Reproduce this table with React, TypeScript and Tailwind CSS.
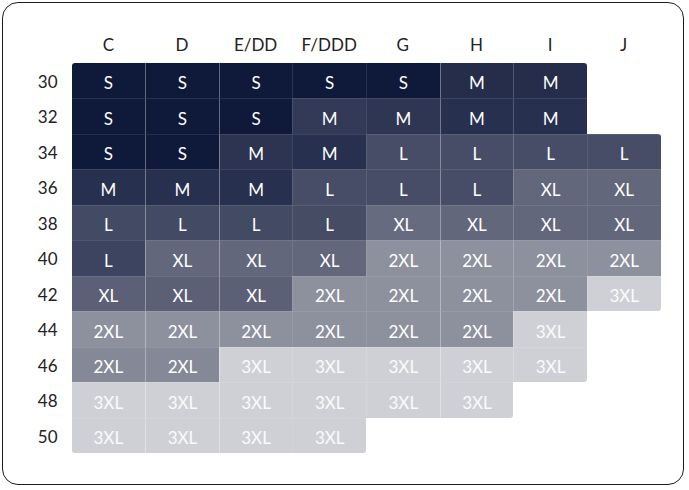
import React from "react";

const cols = ["C", "D", "E/DD", "F/DDD", "G", "H", "I", "J"];
const rows: [string, string[]][] = [
  ["30", ["S", "S", "S", "S", "S", "M", "M"]],
  ["32", ["S", "S", "S", "M", "M", "M", "M"]],
  ["34", ["S", "S", "M", "M", "L", "L", "L", "L"]],
  ["36", ["M", "M", "M", "L", "L", "L", "XL", "XL"]],
  ["38", ["L", "L", "L", "L", "XL", "XL", "XL", "XL"]],
  ["40", ["L", "XL", "XL", "XL", "2XL", "2XL", "2XL", "2XL"]],
  ["42", ["XL", "XL", "XL", "2XL", "2XL", "2XL", "2XL", "3XL"]],
  ["44", ["2XL", "2XL", "2XL", "2XL", "2XL", "2XL", "3XL"]],
  ["46", ["2XL", "2XL", "3XL", "3XL", "3XL", "3XL", "3XL"]],
  ["48", ["3XL", "3XL", "3XL", "3XL", "3XL", "3XL"]],
  ["50", ["3XL", "3XL", "3XL", "3XL"]],
];

const base: Record<string, string> = {
  S: "bg-[#0f1939]",
  M: "bg-[#283050]",
  L: "bg-[#474d66]",
  XL: "bg-[#62677c]",
  "2XL": "bg-[#8d909d]",
  "3XL": "bg-[#cfd0d6]",
};

const overrides: Record<string, string> = {
  "1-3": "bg-[#333a57]",
  "1-4": "bg-[#2e3653]",
  "0-5": "bg-[#252d4b]",
  "0-6": "bg-[#252d4b]",
  "2-2": "bg-[#2c3452]",
  "4-0": "bg-[#434a63]",
  "4-1": "bg-[#434a63]",
  "4-2": "bg-[#434a63]",
  "4-3": "bg-[#454c64]",
  "5-0": "bg-[#3d4460]",
  "4-4": "bg-[#666b80]",
  "6-0": "bg-[#5b6077]",
  "6-1": "bg-[#5b6077]",
  "6-2": "bg-[#5b6077]",
  "8-0": "bg-[#858896]",
  "8-1": "bg-[#858896]",
};

const colBorder = [
  "",
  "border-l border-l-white/35",
  "border-l border-l-white/35",
  "border-l border-l-white/10",
  "border-l border-l-white/10",
  "border-l border-l-white/35",
  "border-l border-l-white/20",
  "border-l border-l-white/10",
];

const corners: Record<string, string> = {
  "0-0": "rounded-tl-[3px]",
  "0-6": "rounded-tr-[3px]",
  "2-7": "rounded-tr-[3px]",
  "6-7": "rounded-br-[3px]",
  "8-6": "rounded-br-[3px]",
  "9-5": "rounded-br-[3px]",
  "10-3": "rounded-br-[3px]",
  "10-0": "rounded-bl-[3px]",
};

export default function App() {
  return (
    <div
      className="w-[689px] h-[490px] bg-white p-[2px]"
      style={{ fontFamily: "Lato, 'Open Sans', sans-serif" }}
    >
      <div className="w-[682px] h-[483px] border-[1.5px] border-[#1c1c1c] rounded-[16px] pt-[21.5px] pl-[68.5px]">
        <div className="grid grid-cols-[repeat(8,73.625px)] h-[38px] pt-[2px] items-center text-[17px] text-[#222]">
          {cols.map((c) => (
            <div key={c} className="text-center">
              {c}
            </div>
          ))}
        </div>
        <div className="relative">
          {rows.map(([label, cells], r) => (
            <div key={label} className="flex h-[35.545px]">
              <div className="absolute left-[-68.5px] w-[54.5px] h-[35.545px] pt-[2px] flex items-center justify-end text-[17px] text-[#222]">
                {label}
              </div>
              {cells.map((s, c) => {
                const key = `${r}-${c}`;
                const bg = overrides[key] ?? base[s];
                const top = r > 0 ? "border-t border-t-white/10" : "";
                const txt = s === "3XL" ? "text-white/90" : "text-white";
                return (
                  <div
                    key={c}
                    className={`w-[73.625px] h-full pt-[4px] flex items-center justify-center text-[17px] ${bg} ${colBorder[c]} ${top} ${txt} ${corners[key] ?? ""}`}
                  >
                    {s}
                  </div>
                );
              })}
            </div>
          ))}
        </div>
      </div>
    </div>
  );
}
